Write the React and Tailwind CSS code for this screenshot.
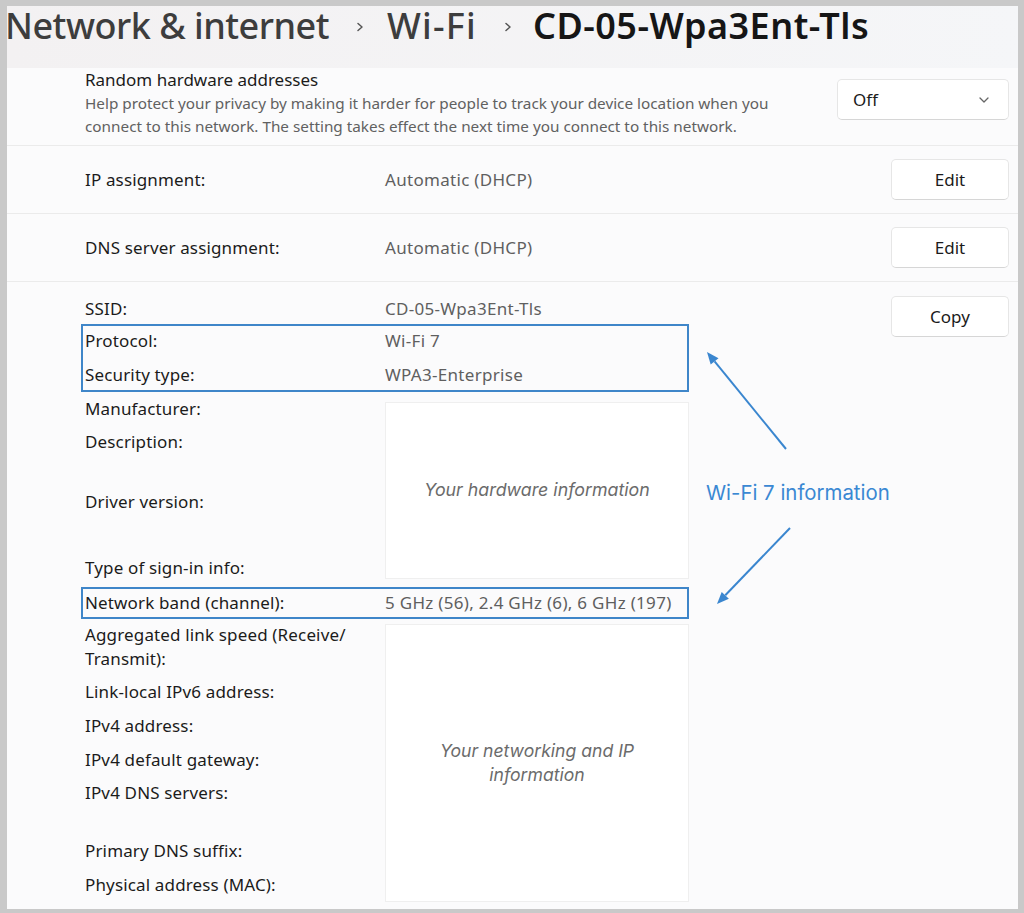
import React from "react";

const Chevron = ({ className }) => (
  <svg width="10" height="14" viewBox="0 0 10 14" className={className}>
    <path d="M3 3.5l4 3.5-4 3.5" stroke="#555" strokeWidth="1.5" fill="none" strokeLinecap="round" strokeLinejoin="round" />
  </svg>
);

const Btn = ({ children }) => (
  <div className="w-[118px] h-[41px] bg-white border border-[#e6e6e6] border-b-[#d6d6d6] rounded-[5px] flex items-center justify-center text-[17px] text-[#1b1b1b]">
    {children}
  </div>
);

const Label = ({ children, className = "" }) => (
  <div className={"leading-[24px] text-[17px] tracking-[0.15px] text-[#1b1b1b] " + className}>{children}</div>
);

const Value = ({ children }) => (
  <div className="leading-[24px] text-[17px] tracking-[0.3px] text-[#5f5f5f] whitespace-nowrap">{children}</div>
);

export default function App() {
  return (
    <div className="w-[1024px] h-[913px] bg-[#c9c9c9] pt-[6px] pl-[7px] pr-[6px] pb-[4px] overflow-hidden font-['Noto_Sans',sans-serif]">
      <div className="relative h-full flex flex-col bg-[#fbfbfc]">
        {/* Header */}
        <div className="h-[62px] shrink-0 bg-gradient-to-r from-[#f3f1f2] to-[#f5f6f8] flex items-start">
          <div className="flex items-center ml-[-2px] mt-[-5px] leading-[50px] text-[36px]">
            <span className="font-medium text-[#3d3d3d] tracking-[-0.5px]">Network &amp; internet</span>
            <Chevron className="ml-[26px] mr-[22px] mt-[2px]" />
            <span className="font-medium text-[#3d3d3d] tracking-[1.2px]">Wi-Fi</span>
            <Chevron className="ml-[26px] mr-[20px] mt-[2px]" />
            <span className="font-semibold text-[#161616] tracking-[0.5px]">CD-05-Wpa3Ent-Tls</span>
          </div>
        </div>

        {/* Random hardware addresses */}
        <div className="h-[78px] shrink-0 flex items-start justify-between pl-[78px] pr-[9px] border-b border-[#ebebeb]">
          <div>
            <div className="leading-[24px] text-[17px] text-[#1b1b1b]">Random hardware addresses</div>
            <div className="leading-[23px] text-[15.3px] text-[#616161] w-[705px]">
              Help protect your privacy by making it harder for people to track your device location when you connect to this network. The setting takes effect the next time you connect to this network.
            </div>
          </div>
          <div className="mt-[11px] w-[172px] h-[41px] bg-white border border-[#e6e6e6] border-b-[#d6d6d6] rounded-[5px] flex items-center justify-between pl-[15px] pr-[18px]">
            <span className="text-[17px] text-[#1b1b1b]">Off</span>
            <svg width="12" height="8" viewBox="0 0 12 8">
              <path d="M2 2l4 4 4-4" stroke="#666" strokeWidth="1.3" fill="none" strokeLinecap="round" strokeLinejoin="round" />
            </svg>
          </div>
        </div>

        {/* IP assignment */}
        <div className="h-[68px] shrink-0 flex items-center justify-between pl-[78px] pr-[9px] border-b border-[#ebebeb]">
          <div className="flex">
            <Label className="w-[300px]">IP assignment:</Label>
            <Value>Automatic (DHCP)</Value>
          </div>
          <Btn>Edit</Btn>
        </div>

        {/* DNS */}
        <div className="h-[68px] shrink-0 flex items-center justify-between pl-[78px] pr-[9px] border-b border-[#ebebeb]">
          <div className="flex">
            <Label className="w-[300px]">DNS server assignment:</Label>
            <Value>Automatic (DHCP)</Value>
          </div>
          <Btn>Edit</Btn>
        </div>

        {/* Properties */}
        <div className="flex-1 flex justify-between pl-[74px] pr-[9px]">
          <div className="w-[608px] pt-[15px]">
            <div className="flex px-[4px]">
              <Label className="w-[300px]">SSID:</Label>
              <Value>CD-05-Wpa3Ent-Tls</Value>
            </div>

            <div className="mt-[3px] border-2 border-[#3f86c9] py-[3px] px-[2px] flex flex-col gap-[10px]">
              <div className="flex">
                <Label className="w-[300px]">Protocol:</Label>
                <Value>Wi-Fi 7</Value>
              </div>
              <div className="flex">
                <Label className="w-[300px]">Security type:</Label>
                <Value>WPA3-Enterprise</Value>
              </div>
            </div>

            <div className="flex pl-[4px] pb-[7px]">
              <div className="w-[300px] pt-[5px]">
                <Label>Manufacturer:</Label>
                <Label className="mt-[9px]">Description:</Label>
                <Label className="mt-[36px]">Driver version:</Label>
                <Label className="mt-[42px]">Type of sign-in info:</Label>
              </div>
              <div className="flex-1 mt-[10px] h-[177px] bg-white border border-[#efefef] flex items-center justify-center">
                <span className="font-['Inter',sans-serif] italic text-[17.8px] text-[#6b6b6b]">Your hardware information</span>
              </div>
            </div>

            <div className="border-2 border-[#3f86c9] py-[2px] px-[2px] flex">
              <Label className="w-[300px]">Network band (channel):</Label>
              <Value>5 GHz (56), 2.4 GHz (6), 6 GHz (197)</Value>
            </div>

            <div className="flex pl-[4px]">
              <div className="w-[300px] pt-[4px]">
                <Label>Aggregated link speed (Receive/<br />Transmit):</Label>
                <Label className="mt-[9px]">Link-local IPv6 address:</Label>
                <Label className="mt-[10px]">IPv4 address:</Label>
                <Label className="mt-[10px]">IPv4 default gateway:</Label>
                <Label className="mt-[9px]">IPv4 DNS servers:</Label>
                <Label className="mt-[34px]">Primary DNS suffix:</Label>
                <Label className="mt-[10px]">Physical address (MAC):</Label>
              </div>
              <div className="flex-1 mt-[5px] h-[278px] bg-white border border-[#efefef] flex items-center justify-center">
                <span className="font-['Inter',sans-serif] italic text-[17.6px] leading-[24px] text-[#6b6b6b] text-center">
                  Your networking and IP<br />information
                </span>
              </div>
            </div>
          </div>

          <div className="pt-[14px]">
            <Btn>Copy</Btn>
          </div>
        </div>

        {/* Annotation */}
        <svg className="absolute left-0 top-0 pointer-events-none" width="1011" height="903">
          <line x1="779" y1="443" x2="707.6" y2="355.3" stroke="#3a86cf" strokeWidth="2" />
          <polygon points="700,346 711.5,352.2 703.7,358.5" fill="#3a86cf" />
          <line x1="783" y1="522" x2="718.3" y2="589.3" stroke="#3a86cf" strokeWidth="2" />
          <polygon points="710,598 721.9,592.8 714.7,585.9" fill="#3a86cf" />
        </svg>
        <div className="absolute left-[699px] top-[473px] font-['Inter',sans-serif] text-[20.4px] leading-[28px] text-[#3a88d3]">
          Wi-Fi 7 information
        </div>
      </div>
    </div>
  );
}
